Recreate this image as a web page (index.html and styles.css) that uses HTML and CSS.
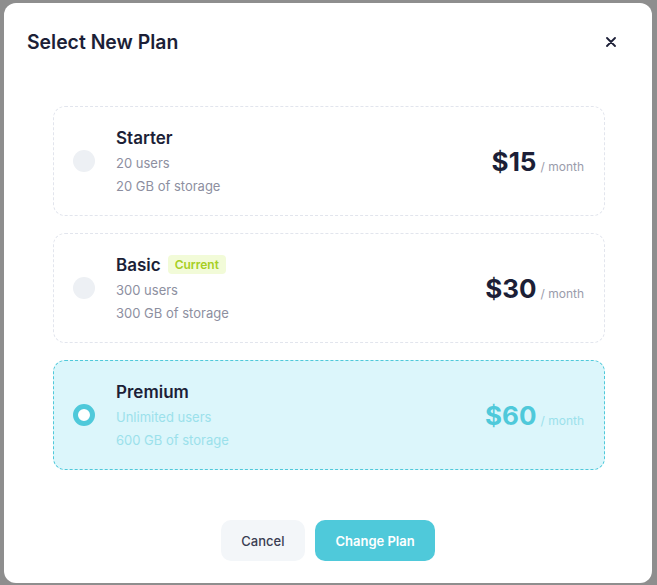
FILE: index.html
```html
<!DOCTYPE html>
<html lang="en">
<head>
<meta charset="utf-8">
<title>Select New Plan</title>
<link rel="stylesheet" href="styles.css">
</head>
<body>
<div class="modal">
  <div class="modal-header">
    <h2 class="modal-title">Select New Plan</h2>
    <button class="close-btn" aria-label="Close">
      <svg width="10" height="10" viewBox="0 0 10 10"><path d="M1 1L9 9M9 1L1 9" stroke="#1c1f37" stroke-width="1.8" stroke-linecap="round"/></svg>
    </button>
  </div>
  <div class="plans">
    <div class="plan">
      <span class="radio"></span>
      <div class="plan-info">
        <div class="plan-name">Starter</div>
        <div class="plan-detail">20 users</div>
        <div class="plan-detail">20 GB of storage</div>
      </div>
      <div class="plan-price"><span class="amount">$15</span><span class="period">/ month</span></div>
    </div>
    <div class="plan">
      <span class="radio"></span>
      <div class="plan-info">
        <div class="plan-name">Basic <span class="badge">Current</span></div>
        <div class="plan-detail">300 users</div>
        <div class="plan-detail">300 GB of storage</div>
      </div>
      <div class="plan-price"><span class="amount">$30</span><span class="period">/ month</span></div>
    </div>
    <div class="plan selected">
      <span class="radio"></span>
      <div class="plan-info">
        <div class="plan-name">Premium</div>
        <div class="plan-detail">Unlimited users</div>
        <div class="plan-detail">600 GB of storage</div>
      </div>
      <div class="plan-price"><span class="amount">$60</span><span class="period">/ month</span></div>
    </div>
  </div>
  <div class="actions">
    <button class="btn btn-cancel">Cancel</button>
    <button class="btn btn-primary">Change Plan</button>
  </div>
</div>
</body>
</html>
```
FILE: styles.css
```css
html, body {
  margin: 0;
  padding: 0;
}
body {
  background: #8e8e8e;
  font-family: Inter, "Noto Sans", sans-serif;
  color: #1c1f37;
}
.modal {
  box-sizing: border-box;
  margin: 3px 5px 0 4px;
  height: 580px;
  background: #ffffff;
  border-radius: 12px;
  display: flex;
  flex-direction: column;
}
.modal-header {
  display: flex;
  align-items: center;
  justify-content: space-between;
  padding: 27px 36px 0 23px;
}
.modal-title {
  margin: 0;
  font-size: 19.4px;
  line-height: 24px;
  font-weight: 600;
  color: #1c1f37;
}
.close-btn {
  border: 0;
  background: none;
  padding: 0;
  width: 10px;
  height: 10px;
  display: flex;
  cursor: pointer;
}
.plans {
  display: flex;
  flex-direction: column;
  gap: 17px;
  margin: 52px 47px 0 49px;
}
.plan {
  box-sizing: border-box;
  height: 110px;
  border: 1px dashed #e2e5ed;
  border-radius: 12px;
  display: flex;
  align-items: center;
  padding: 0 20px 0 19px;
}
.radio {
  box-sizing: border-box;
  width: 22px;
  height: 22px;
  border-radius: 50%;
  background: #edf0f4;
  flex: none;
}
.plan-info {
  margin-left: 21px;
  padding-top: 2px;
  flex: 1;
}
.plan-name {
  display: flex;
  align-items: center;
  gap: 7px;
  font-size: 17px;
  line-height: 23px;
  font-weight: 600;
  color: #1c1f37;
  margin-bottom: 2px;
}
.badge {
  font-size: 12px;
  line-height: 19px;
  font-weight: 600;
  color: #a6cf24;
  background: #f2fbd8;
  border-radius: 4px;
  padding: 0 7px;
  margin-bottom: 2px;
}
.plan-detail {
  font-size: 13px;
  line-height: 23px;
  color: #8d8f9f;
}
.plan-price {
  display: flex;
  align-items: baseline;
  gap: 4px;
}
.amount {
  font-size: 26px;
  font-weight: 700;
  color: #1c1f37;
}
.period {
  font-size: 12px;
  color: #9a9cab;
}
.plan.selected {
  background: #dcf6fb;
  border-color: #4fc9da;
}
.plan.selected .radio {
  background: #ffffff;
  border: 5.5px solid #4fc9da;
}
.plan.selected .plan-detail {
  color: #9be1eb;
}
.plan.selected .amount {
  color: #4fc9da;
}
.plan.selected .period {
  color: #9be1eb;
}
.actions {
  display: flex;
  justify-content: center;
  gap: 10px;
  margin-top: 50px;
}
.btn {
  height: 41px;
  border: 0;
  border-radius: 10px;
  font-family: Inter, "Noto Sans", sans-serif;
  font-size: 13px;
  cursor: pointer;
}
.btn-cancel {
  padding: 0 20.5px;
  background: #f3f6f9;
  color: #3a3d52;
  font-weight: 500;
}
.btn-primary {
  padding: 0 20.5px;
  background: #4fc9da;
  color: #ffffff;
  font-weight: 600;
}
```
